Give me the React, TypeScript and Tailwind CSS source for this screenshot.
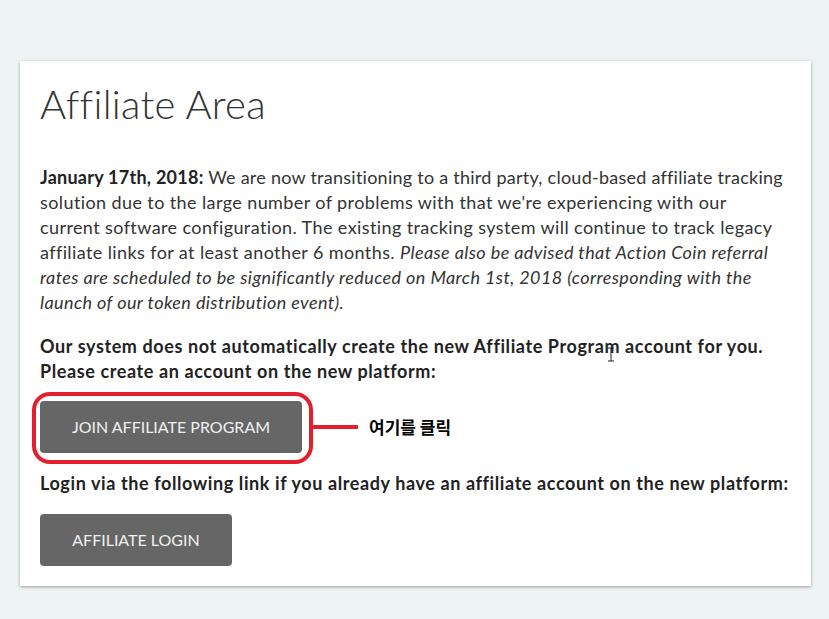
export default function App() {
  return (
    <div className="min-h-[619px] w-[829px] bg-[#eef3f3] pt-[61px] pl-[20px] font-['Lato',sans-serif]">
      <div className="relative w-[791px] bg-white px-[20px] pt-[19px] pb-[20px] text-[#333] shadow-[0_1px_3px_rgba(0,0,0,0.35)]">
        <h1 className="text-[40px] font-light leading-[48px] tracking-[0.3px] text-[#333]">Affiliate Area</h1>

        <p className="mt-[37px] whitespace-nowrap text-[18px] leading-[25px] tracking-[0.4px]">
          <span className="tracking-[0.25px]">
            <strong className="font-bold text-[#222]">January 17th, 2018:</strong> We are now transitioning to a
            third party, cloud-based affiliate tracking
          </span>
          <br />
          solution due to the large number of problems with that we're experiencing with our
          <br />
          current software configuration. The existing tracking system will continue to track legacy
          <br />
          affiliate links for at least another 6 months.{' '}
          <em>
            Please also be advised that Action Coin referral
            <br />
            rates are scheduled to be significantly reduced on March 1st, 2018 (corresponding with the
            <br />
            launch of our token distribution event).
          </em>
        </p>

        <p className="mt-[19px] text-[18px] font-bold leading-[25px] tracking-[0.6px] text-[#222]">
          Our system does not automatically create the new Affiliate Program account for you.
          <br />
          Please create an account on the new platform:
        </p>

        {/* Join button with red callout */}
        <div className="relative mt-[17px] flex items-center">
          <button className="h-[52px] w-[262px] rounded-[4px] bg-[#666] text-[16px] text-[#f0f0f0]">
            JOIN AFFILIATE PROGRAM
          </button>
          <div className="pointer-events-none absolute left-[-8px] top-[-9px] h-[72px] w-[281px] rounded-[18px] border-[4px] border-[#e31e2d]" />
          <div className="ml-[11px] h-[4px] w-[45px] bg-[#e31e2d]" />
          <span className="ml-[11px] font-['Noto_Sans_CJK_KR',sans-serif] text-[17px] font-bold text-black">
            여기를 클릭
          </span>
        </div>

        <p className="mt-[18px] text-[18px] font-bold leading-[25px] tracking-[0.6px] text-[#222]">
          Login via the following link if you already have an affiliate account on the new platform:
        </p>

        <button className="mt-[18px] h-[52px] w-[192px] rounded-[4px] bg-[#666] text-[16px] text-[#f0f0f0]">
          AFFILIATE LOGIN
        </button>

        {/* text cursor */}
        <svg className="absolute left-[587px] top-[286px]" width="8" height="15" viewBox="0 0 8 15">
          <path d="M1 1h6M4 1v13M1 14h6" stroke="#222" strokeWidth="1" fill="none" />
        </svg>
      </div>
    </div>
  )
}
